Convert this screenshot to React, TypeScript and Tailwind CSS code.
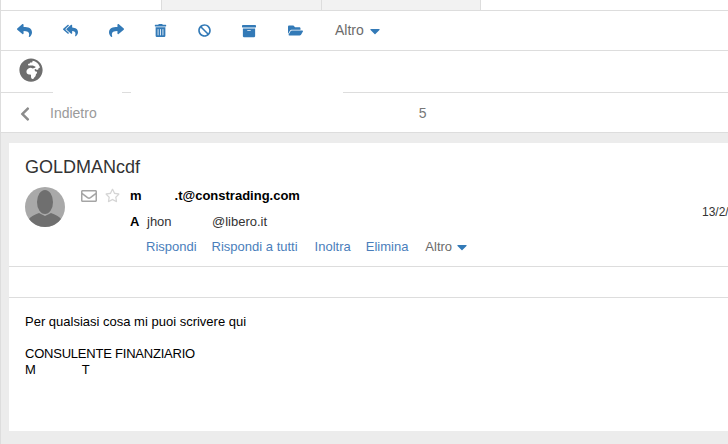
import { FaReply, FaReplyAll, FaShare, FaTrashAlt, FaBan, FaArchive, FaFolderOpen, FaGlobeAfrica, FaChevronLeft, FaCaretDown, FaRegEnvelope, FaRegStar } from 'react-icons/fa'

const toolbarIcons = [
  { icon: <FaReply size={15} />, className: 'w-[46px]' },
  { icon: <FaReplyAll size={15} />, className: 'w-[46px]' },
  { icon: <FaShare size={15} />, className: 'w-[45px]' },
  { icon: <FaTrashAlt size={13} />, className: 'w-[44px]' },
  { icon: <FaBan size={13} />, className: 'w-[44px]' },
  { icon: <FaArchive size={14} />, className: 'w-[46px]' },
  { icon: <FaFolderOpen size={15} />, className: 'w-[45px]' },
]

const Avatar = () => (
  <svg width="40" height="40" viewBox="0 0 40 40">
    <circle cx="20" cy="20" r="20" fill="#a9a9a9" />
    <ellipse cx="20" cy="15" rx="8" ry="12" fill="#6f6f6f" />
    <path d="M4 32 Q6 29 14 26 L20 29 L26 26 Q34 29 36 32 A20 20 0 0 1 4 32 Z" fill="#6f6f6f" />
  </svg>
)

const App = () => {
  return (
    <div className="h-[444px] w-[728px] overflow-hidden border-l border-[#dddddd] bg-[#ececec] font-['Liberation_Sans',sans-serif]">
      {/* Tabs */}
      <div className="flex h-[11px] border-b border-[#dddddd] bg-white">
        <div className="w-[160px]" />
        <div className="w-[160px] border-l border-[#dddddd] bg-[#f2f2f2]" />
        <div className="w-[160px] border-x border-[#dddddd] bg-[#f2f2f2]" />
      </div>

      {/* Toolbar */}
      <div className="flex h-[40px] items-center border-b border-[#dddddd] bg-white pl-[16px] text-[#337ab7]">
        {toolbarIcons.map((item, i) => (
          <span key={i} className={item.className}>
            {item.icon}
          </span>
        ))}
        <span className="ml-[2px] flex items-center gap-[3px] text-[14px] text-[#6b6b6b]">
          Altro
          <FaCaretDown size={16} className="text-[#337ab7]" />
        </span>
      </div>

      {/* Globe row */}
      <div className="h-[41px] bg-white pl-[18px] pt-[7px] text-[#6e6e6e]">
        <FaGlobeAfrica size={24} />
      </div>
      <div className="flex h-[1px] bg-white">
        <div className="w-[52px] bg-[#dddddd]" />
        <div className="ml-[69px] w-[9px] bg-[#dddddd]" />
        <div className="ml-[212px] flex-1 bg-[#dddddd]" />
      </div>

      {/* Back row */}
      <div className="flex h-[40px] items-center border-b border-[#dddddd] bg-white pl-[16px] pt-[2px] text-[14px] text-[#9a9a9a]">
        <FaChevronLeft size={16} className="text-[#8c8c8c]" />
        <span className="ml-[17px]">Indietro</span>
        <span className="ml-[322px] text-[#777777]">5</span>
      </div>

      {/* Message card */}
      <div className="ml-[8px] mt-[10px] h-[288px] w-[760px] bg-white text-[#111111]">
        <h1 className="pl-[16px] pt-[12px] text-[18px] leading-[24px] text-[#333333]">GOLDMANcdf</h1>
        <div className="relative flex h-[88px] border-b border-[#dddddd] pl-[16px] pt-[8px]">
          <Avatar />
          <div className="ml-[16px] flex h-[16px] gap-[8px] pt-[1px]">
            <FaRegEnvelope size={16} className="text-[#a5a5a5]" />
            <FaRegStar size={15} className="text-[#d5d5d5]" />
          </div>
          <div className="ml-[10px] flex-1 pt-[1px]">
            <div className="flex text-[13px] font-bold leading-[16px] text-black">
              <span>m</span>
              <span className="ml-[33px]">.t@constrading.com</span>
            </div>
            <div className="mt-[10px] flex text-[13px] leading-[16px]">
              <span className="w-[17px] font-bold text-black">A</span>
              <span className="w-[25px] text-[#333333]">jhon</span>
              <span className="ml-[40px] text-[#333333]">@libero.it</span>
            </div>
            <div className="mt-[9px] flex pl-[16px] text-[13px] leading-[16px] text-[#4a7ebb]">
              <span>Rispondi</span>
              <span className="ml-[15px]">Rispondi a tutti</span>
              <span className="ml-[17px]">Inoltra</span>
              <span className="ml-[15px]">Elimina</span>
              <span className="ml-[17px] flex items-center gap-[2px] text-[#6b6b6b]">
                Altro
                <FaCaretDown size={16} className="text-[#337ab7]" />
              </span>
            </div>
          </div>
          <span className="absolute left-[693px] top-[25px] text-[12px] leading-[16px] text-[#333333]">13/2/2018</span>
        </div>

        <div className="h-[31px] border-b border-[#dddddd]" />

        <div className="pl-[16px] pt-[16px] text-[13px] leading-[16px] text-black">
          <p>Per qualsiasi cosa mi puoi scrivere qui</p>
          <p className="mt-[16px] tracking-[-0.22px]">CONSULENTE FINANZIARIO</p>
          <p className="flex">
            <span>M</span>
            <span className="ml-[46px]">T</span>
          </p>
        </div>
      </div>
    </div>
  )
}

export default App
